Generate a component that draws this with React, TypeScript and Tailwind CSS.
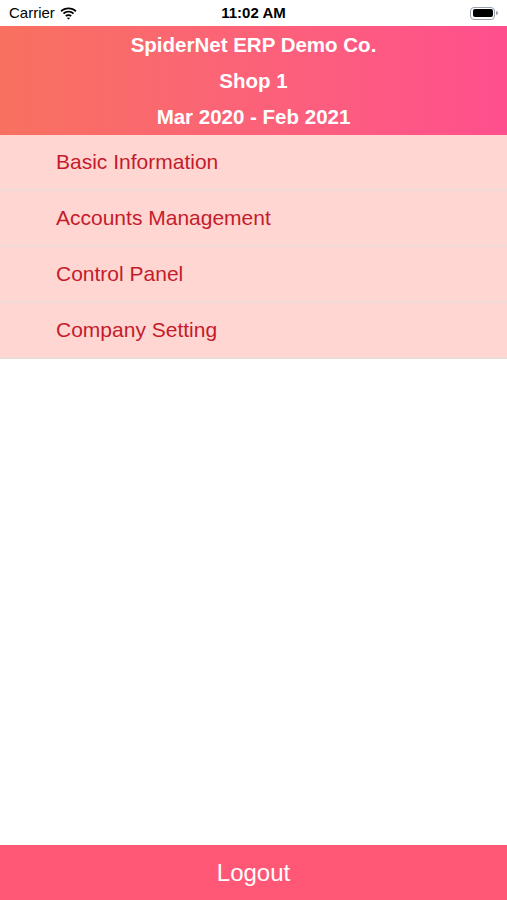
const menuItems = ['Basic Information', 'Accounts Management', 'Control Panel', 'Company Setting'];

function StatusBar() {
  return (
    <div className="relative flex h-[26px] items-center justify-between bg-white px-[9px] text-[15px] text-black">
      <div className="flex items-center gap-[5px]">
        <span>Carrier</span>
        <svg width="17" height="13" viewBox="0 0 17 13" fill="black">
          <path d="M8.5 2.2c2.6 0 5 1 6.8 2.7l1.2-1.3C14.4 1.6 11.6.4 8.5.4S2.6 1.6.5 3.6l1.2 1.3C3.5 3.2 5.9 2.2 8.5 2.2z" />
          <path d="M8.5 5.6c1.7 0 3.2.6 4.4 1.7l1.2-1.3c-1.5-1.4-3.5-2.2-5.6-2.2S4.4 4.6 2.9 6l1.2 1.3c1.2-1.1 2.7-1.7 4.4-1.7z" />
          <path d="M8.5 9c.8 0 1.5.3 2 .8l1.3-1.3c-.9-.8-2-1.3-3.3-1.3s-2.4.5-3.3 1.3l1.3 1.3c.5-.5 1.2-.8 2-.8zM8.5 12.6l1.6-1.6c-.4-.4-1-.6-1.6-.6s-1.2.2-1.6.6z" />
        </svg>
      </div>
      <span className="absolute left-1/2 -translate-x-1/2 font-semibold">11:02 AM</span>
      <div className="flex items-center">
        <div className="flex h-[13px] w-[25px] items-center rounded-[4px] border border-gray-400 p-[1.5px]">
          <div className="h-full w-full rounded-[2px] bg-black" />
        </div>
        <div className="ml-[1px] h-[4px] w-[2px] rounded-r-sm bg-gray-400" />
      </div>
    </div>
  );
}

export default function App() {
  return (
    <div
      className="flex h-[900px] w-[507px] flex-col bg-white"
      style={{ fontFamily: '"Liberation Sans", Arial, sans-serif' }}
    >
      <StatusBar />

      {/* Header */}
      <div className="flex h-[109px] flex-col items-center justify-center bg-gradient-to-r from-[#f8715f] to-[#ff4f8e] pt-[1px] text-[20.5px] font-bold leading-[36px] text-white">
        <div>SpiderNet ERP Demo Co.</div>
        <div>Shop 1</div>
        <div>Mar 2020 - Feb 2021</div>
      </div>

      {/* Menu */}
      <div className="flex flex-col">
        {menuItems.map((item) => (
          <div
            key={item}
            className="flex h-[56px] items-center border-b-[2px] border-[#eedbd8] bg-[#ffd6d1] pl-[56px] text-[21px] text-[#c51b2c]"
          >
            {item}
          </div>
        ))}
      </div>

      <div className="flex-1" />

      {/* Logout */}
      <button className="flex h-[55px] w-full items-center justify-center bg-[#ff5876] text-[24px] text-white">
        Logout
      </button>
    </div>
  );
}
